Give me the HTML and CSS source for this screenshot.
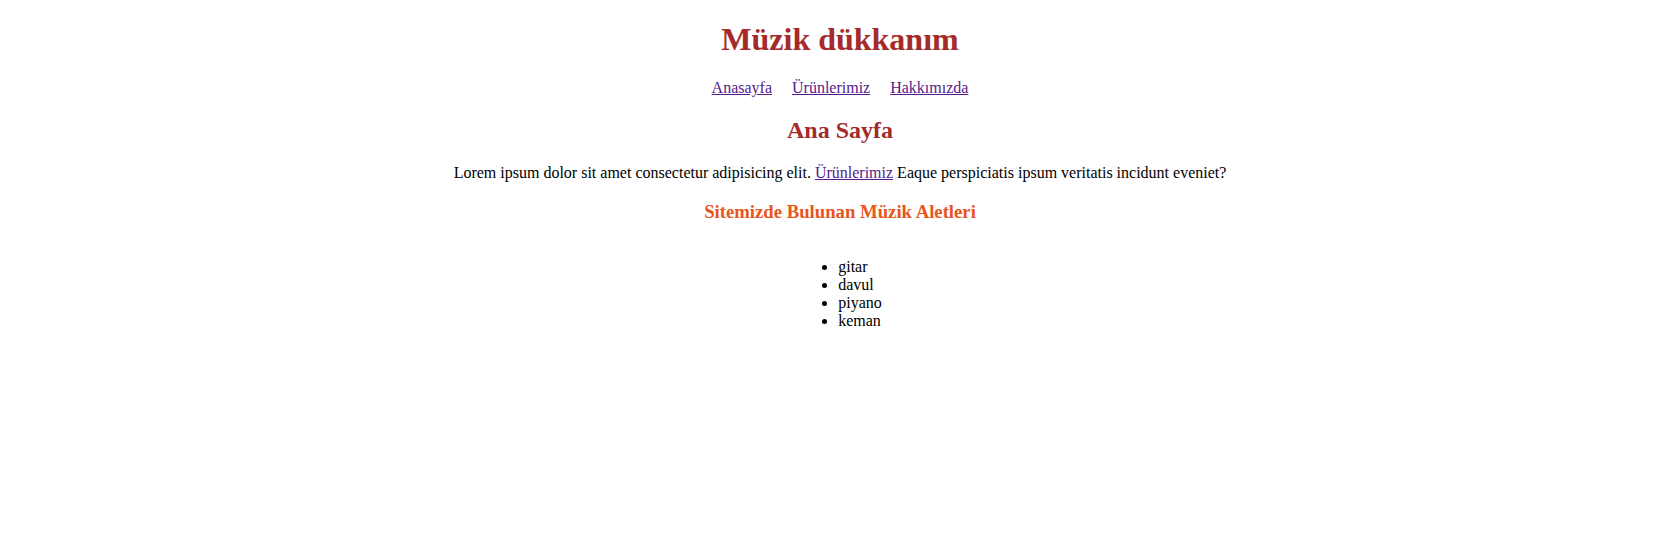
FILE: index.html
```html
<!DOCTYPE html>
<html lang="tr">
<head>
<meta charset="utf-8">
<title>Müzik dükkanım</title>
<link rel="stylesheet" href="styles.css">
</head>
<body>
<header class="site-header">
  <h1 class="site-title">Müzik dükkanım</h1>
  <nav class="nav">
    <a href="#">Anasayfa</a>
    <a href="#">Ürünlerimiz</a>
    <a href="#">Hakkımızda</a>
  </nav>
</header>
<main class="content">
  <h2 class="page-title">Ana Sayfa</h2>
  <p class="intro">Lorem ipsum dolor sit amet consectetur adipisicing elit. <a href="#">Ürünlerimiz</a> Eaque perspiciatis ipsum veritatis incidunt eveniet?</p>
  <h3 class="section-title">Sitemizde Bulunan Müzik Aletleri</h3>
  <div class="list-wrap">
    <ul class="instruments">
      <li>gitar</li>
      <li>davul</li>
      <li>piyano</li>
      <li>keman</li>
    </ul>
  </div>
</main>
</body>
</html>
```
FILE: styles.css
```css
body {
  margin: 0 8px 8px;
  padding-left: 4px;
  font-family: "Liberation Serif", "Times New Roman", serif;
  font-size: 16px;
  color: #000;
  text-align: center;
  background: #fff;
}
a {
  color: #551a8b;
}
.site-title {
  color: #a52a2a;
  font-size: 32px;
  margin: 21px 0 21.44px;
}
.nav {
  margin: 16px 0;
}
.nav a {
  margin: 0 8px;
}
.page-title {
  color: #a52a2a;
  font-size: 24px;
  margin: 19.92px 0;
}
.intro {
  margin: 16px 0;
}
.section-title {
  color: #e8561c;
  font-size: 18.72px;
  margin: 18.72px 0;
}
.list-wrap {
  padding-top: 0;
}
.instruments {
  display: inline-block;
  text-align: left;
  margin: 16px 0;
  padding-left: 40px;
}
```
